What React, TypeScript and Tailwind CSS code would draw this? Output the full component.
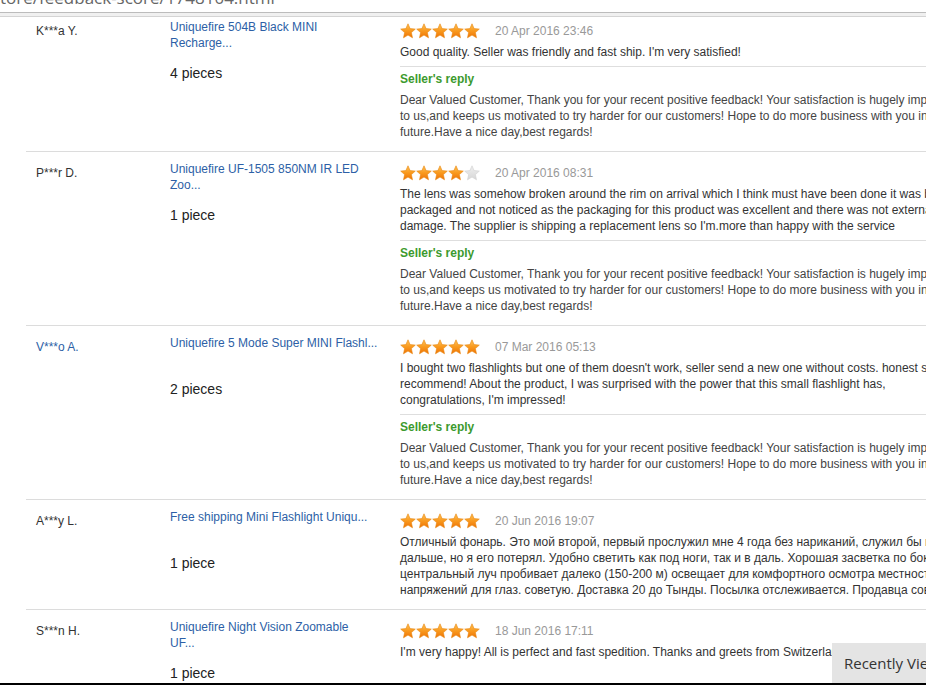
import React from "react";

type Row = {
  name: string;
  nameLink?: boolean;
  product: string[];
  qty: string;
  stars: number;
  date: string;
  review: string[];
  reply?: string[];
};

const REPLY = [
  "Dear Valued Customer, Thank you for your recent positive feedback! Your satisfaction is hugely important",
  "to us,and keeps us motivated to try harder for our customers! Hope to do more business with you in the",
  "future.Have a nice day,best regards!",
];

const rows: Row[] = [
  {
    name: "K***a Y.",
    product: ["Uniquefire 504B Black MINI", "Recharge..."],
    qty: "4 pieces",
    stars: 5,
    date: "20 Apr 2016 23:46",
    review: ["Good quality. Seller was friendly and fast ship. I'm very satisfied!"],
    reply: REPLY,
  },
  {
    name: "P***r D.",
    product: ["Uniquefire UF-1505 850NM IR LED", "Zoo..."],
    qty: "1 piece",
    stars: 4,
    date: "20 Apr 2016 08:31",
    review: [
      "The lens was somehow broken around the rim on arrival which I think must have been done it was being",
      "packaged and not noticed as the packaging for this product was excellent and there was not external",
      "damage. The supplier is shipping a replacement lens so I'm.more than happy with the service",
    ],
    reply: REPLY,
  },
  {
    name: "V***o A.",
    nameLink: true,
    product: ["Uniquefire 5 Mode Super MINI Flashl..."],
    qty: "2 pieces",
    stars: 5,
    date: "07 Mar 2016 05:13",
    review: [
      "I bought two flashlights but one of them doesn't work, seller send a new one without costs. honest seller,",
      "recommend! About the product, I was surprised with the power that this small flashlight has,",
      "congratulations, I'm impressed!",
    ],
    reply: REPLY,
  },
  {
    name: "A***y L.",
    product: ["Free shipping Mini Flashlight Uniqu..."],
    qty: "1 piece",
    stars: 5,
    date: "20 Jun 2016 19:07",
    review: [
      "Отличный фонарь. Это мой второй, первый прослужил мне 4 года без нариканий, служил бы и",
      "дальше, но я его потерял. Удобно светить как под ноги, так и в даль. Хорошая засветка по бокам,",
      "центральный луч пробивает далеко (150-200 м) освещает для комфортного осмотра местности без",
      "напряжений для глаз. советую. Доставка 20 до Тынды. Посылка отслеживается. Продавца советую.",
    ],
  },
  {
    name: "S***n H.",
    product: ["Uniquefire Night Vision Zoomable", "UF..."],
    qty: "1 piece",
    stars: 5,
    date: "18 Jun 2016 17:11",
    review: ["I'm very happy! All is perfect and fast spedition. Thanks and greets from Switzerland"],
  },
];

function Star({ filled, id }: { filled: boolean; id: string }) {
  return (
    <svg width="16" height="16" viewBox="0 0 16 16" className="block">
      <defs>
        <linearGradient id={id} x1="0" y1="0" x2="0" y2="1">
          {filled ? (
            <>
              <stop offset="0" stopColor="#ffc25a" />
              <stop offset="0.5" stopColor="#f99a1e" />
              <stop offset="1" stopColor="#ee7205" />
            </>
          ) : (
            <>
              <stop offset="0" stopColor="#f0f0f0" />
              <stop offset="1" stopColor="#d6d6d6" />
            </>
          )}
        </linearGradient>
      </defs>
      <polygon
        points="8,0.8 10.1,5.6 15.3,6.1 11.4,9.6 12.5,14.8 8,12.1 3.5,14.8 4.6,9.6 0.7,6.1 5.9,5.6"
        fill={`url(#${id})`}
        stroke={filled ? "#e8860f" : "#d0d0d0"}
        strokeWidth="0.6"
        strokeLinejoin="round"
      />
    </svg>
  );
}

function Stars({ n, rowIdx }: { n: number; rowIdx: number }) {
  return (
    <div className="flex">
      {[0, 1, 2, 3, 4].map((i) => (
        <Star key={i} filled={i < n} id={`g-${rowIdx}-${i}`} />
      ))}
    </div>
  );
}

export default function App() {
  return (
    <div
      className="relative h-[685px] w-[926px] overflow-hidden bg-white flex flex-col"
      style={{ fontFamily: "'Liberation Sans', Arial, sans-serif" }}
    >
      {/* browser address bar remnant */}
      <div className="relative z-10 bg-white shrink-0">
        <div className="h-[12px] overflow-hidden">
          <div
            className="-mt-[13px] text-[17px] leading-[22px] text-[#666] whitespace-nowrap"
            style={{ fontFamily: "'Open Sans', 'Noto Sans', sans-serif" }}
          >
            tore/feedback-score/1748104.html
          </div>
        </div>
        <div className="h-[1px] bg-[#bcbcbc]" />
        <div className="h-[3px] bg-[#f0f0f0]" />
        <div className="h-[1px] bg-[#d4d4d4]" />
      </div>

      <div className="flex-1 overflow-hidden -mt-[8px]">
        {rows.map((r, idx) => (
          <div key={idx} className="ml-[26px] border-t border-[#dcdcdc] pl-[10px] flex items-start">
            <div className="w-[134px] shrink-0 pt-[13px] text-[12px] leading-[16px]">
              <span className={r.nameLink ? "text-[#2d5fa6]" : "text-[#333]"}>{r.name}</span>
            </div>
            <div className="w-[230px] shrink-0 pt-[9px]">
              <div className="h-[32px] text-[12px] leading-[16px] text-[#2d5fa6]">
                {r.product.map((l, i) => (
                  <div key={i} className="whitespace-nowrap">{l}</div>
                ))}
              </div>
              <div className="mt-[12px] text-[14px] leading-[20px] text-[#222]">{r.qty}</div>
            </div>
            <div className="flex-1 pt-[11px] pb-[11px] min-w-0">
              <div className="h-[20px] flex items-center">
                <Stars n={r.stars} rowIdx={idx} />
                <span className="ml-[15px] text-[12px] text-[#999]">{r.date}</span>
              </div>
              <div className="mt-[3px] text-[12px] leading-[16px] text-[#333]">
                {r.review.map((l, i) => (
                  <div key={i} className="whitespace-nowrap">{l}</div>
                ))}
              </div>
              {r.reply && (
                <>
                  <div className="mt-[6px] border-t border-[#dedede]" />
                  <div className="pt-[4px] text-[12px] leading-[16px] font-bold text-[#3c9a2e]">
                    Seller's reply
                  </div>
                  <div className="mt-[5px] text-[12px] leading-[16px] text-[#444]">
                    {r.reply.map((l, i) => (
                      <div key={i} className="whitespace-nowrap">{l}</div>
                    ))}
                  </div>
                </>
              )}
            </div>
          </div>
        ))}
      </div>

      <div className="h-[2px] bg-black shrink-0" />

      <div
        className="absolute right-0 bottom-[2px] w-[94px] h-[40px] bg-[#e4e4e4] pl-[12px] flex items-center overflow-hidden whitespace-nowrap text-[15px] text-[#333]"
        style={{ fontFamily: "'Open Sans', 'Noto Sans', sans-serif" }}
      >
        Recently Viewed
      </div>
    </div>
  );
}
